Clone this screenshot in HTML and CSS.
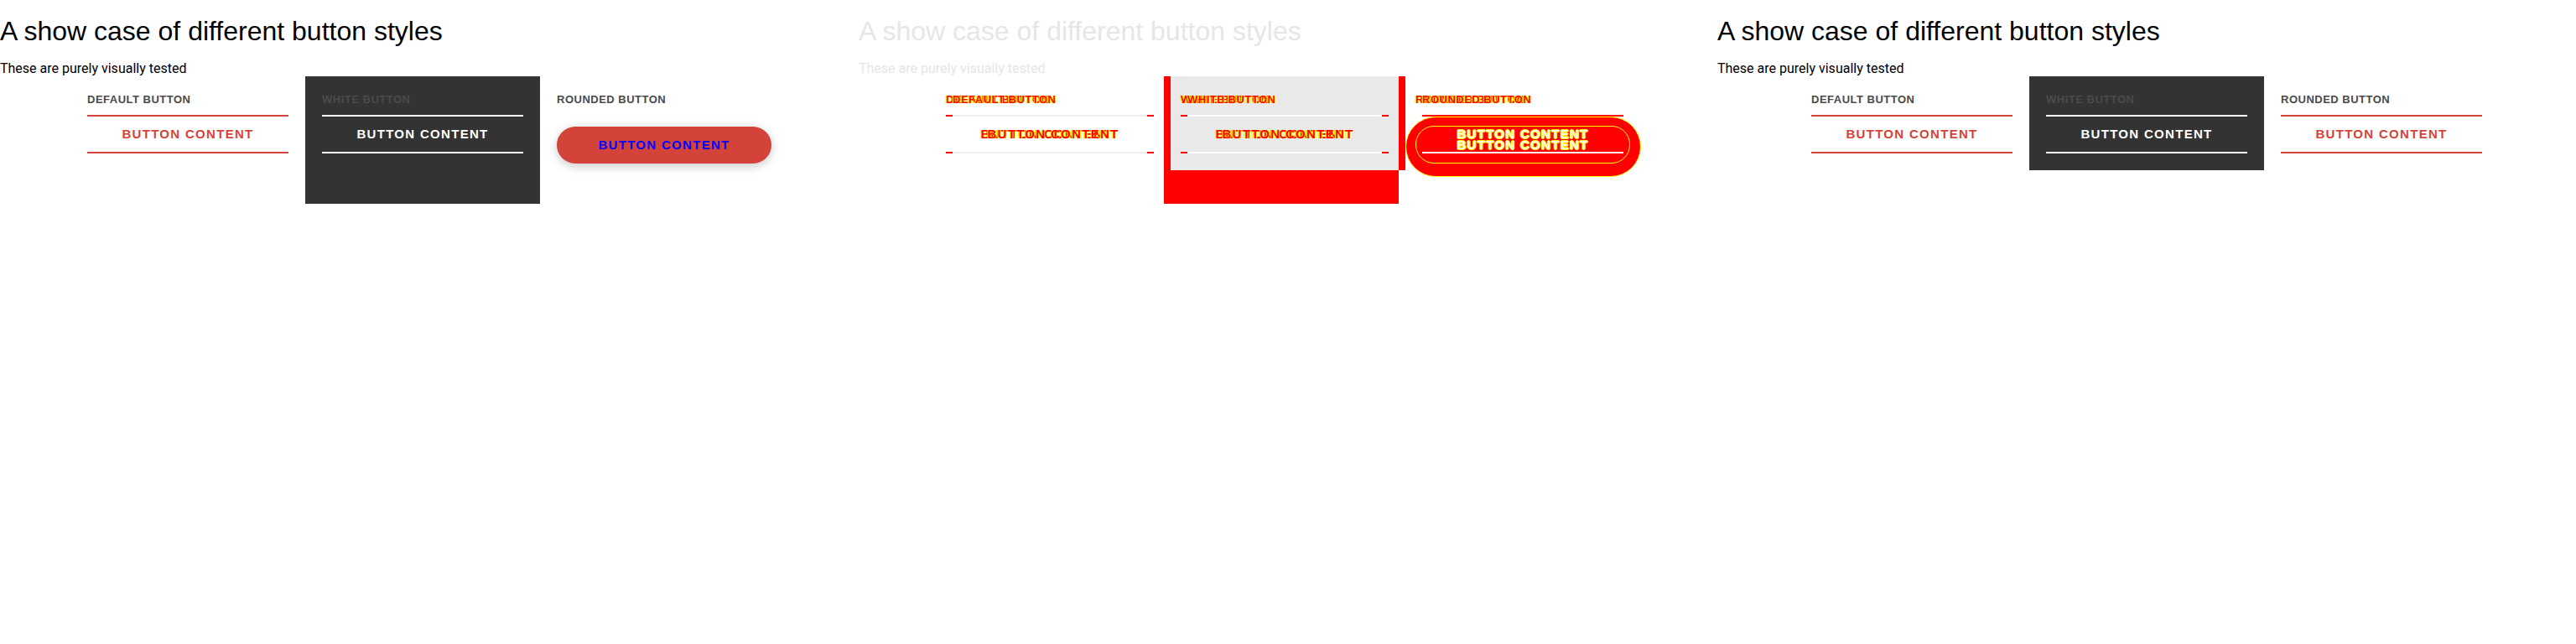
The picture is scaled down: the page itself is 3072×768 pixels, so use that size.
FILE: index.html
```html
<!DOCTYPE html>
<html>
<head>
<meta charset="utf-8">
<title>Button styles</title>
<link rel="stylesheet" href="styles.css">
</head>
<body>
<div class="screen">
  <section class="panel">
    <h1 class="title">A show case of different button styles</h1>
    <p class="lead">These are purely visually tested</p>
    <div class="row">
      <div class="col">
        <div class="label">DEFAULT BUTTON</div>
        <div class="btn">BUTTON CONTENT</div>
      </div>
      <div class="col col-dark">
        <div class="label">WHITE BUTTON</div>
        <div class="btn btn-white">BUTTON CONTENT</div>
      </div>
      <div class="col col-round">
        <div class="label">ROUNDED BUTTON</div>
        <div class="btn btn-round">BUTTON CONTENT</div>
      </div>
    </div>
  </section>

  <section class="panel panel-diff">
    <h1 class="title">A show case of different button styles</h1>
    <p class="lead">These are purely visually tested</p>
    <div class="diff-map">
      <div class="blk blk-a"></div>
      <div class="blk blk-b"></div>
      <div class="blk blk-c"></div>
      <div class="blk blk-d"></div>

      <div class="ln ln-fade ln-1t"></div>
      <div class="ln ln-fade ln-1b"></div>
      <div class="ln ln-white ln-2t"></div>
      <div class="ln ln-white ln-2b"></div>
      <div class="seg seg-1"></div>
      <div class="seg seg-2"></div>
      <div class="seg seg-3"></div>
      <div class="seg seg-4"></div>
      <div class="seg seg-5"></div>
      <div class="seg seg-6"></div>
      <div class="seg seg-7"></div>
      <div class="seg seg-8"></div>

      <div class="pill-outer"></div>
      <div class="ln ln-red ln-3t"></div>
      <div class="pill-inner"></div>
      <div class="ln ln-white ln-3b"></div>

      <div class="gl gl-1">DEFAULT BUTTON</div>
      <div class="gl gl-2">DEFAULT BUTTON</div>
      <div class="gl gl-3">WHITE BUTTON</div>
      <div class="gl gl-4">WHITE BUTTON</div>
      <div class="gl gl-5">ROUNDED BUTTON</div>
      <div class="gl gl-6">ROUNDED BUTTON</div>

      <div class="gt gt-1">BUTTON CONTENT</div>
      <div class="gt gt-2">BUTTON CONTENT</div>
      <div class="gt gt-3">BUTTON CONTENT</div>
      <div class="gt gt-4">BUTTON CONTENT</div>
      <div class="gw gw-1">BUTTON CONTENT</div>
      <div class="gw gw-2">BUTTON CONTENT</div>
    </div>
  </section>

  <section class="panel">
    <h1 class="title">A show case of different button styles</h1>
    <p class="lead">These are purely visually tested</p>
    <div class="row">
      <div class="col">
        <div class="label">DEFAULT BUTTON</div>
        <div class="btn">BUTTON CONTENT</div>
      </div>
      <div class="col col-dark">
        <div class="label">WHITE BUTTON</div>
        <div class="btn btn-white">BUTTON CONTENT</div>
      </div>
      <div class="col">
        <div class="label">ROUNDED BUTTON</div>
        <div class="btn">BUTTON CONTENT</div>
      </div>
    </div>
  </section>
</div>
</body>
</html>
```

FILE: styles.css
```css
html, body {
  margin: 0;
  padding: 0;
  background: #fff;
}

.screen {
  display: flex;
  width: 3072px;
  height: 768px;
}

.panel {
  flex: none;
  width: 1024px;
  height: 768px;
  overflow: hidden;
}

.title {
  margin: 19px 0 0;
  font: 400 32px/36px "Liberation Sans", Arial, sans-serif;
  color: #000;
}

.lead {
  margin: 17px 0 0;
  font: 400 16px/19px Roboto, "Liberation Sans", sans-serif;
  color: #000;
}

.row {
  display: flex;
  justify-content: center;
  align-items: stretch;
}

.col {
  width: 240px;
  padding: 20px;
}

.col-dark {
  background: #333333;
}

.col-round {
  width: 256px;
}

.label {
  margin-bottom: 11px;
  font: 700 13px/15px "Liberation Sans", Arial, sans-serif;
  letter-spacing: 0.5px;
  color: #4a4a4a;
  white-space: nowrap;
}

.btn {
  height: 42px;
  border-top: 2px solid #d4433a;
  border-bottom: 2px solid #d4433a;
  font: 700 15px/42px "Liberation Sans", Arial, sans-serif;
  letter-spacing: 1.3px;
  text-align: center;
  color: #d4433a;
  white-space: nowrap;
}

.btn-white {
  border-color: #fff;
  color: #fff;
}

.btn-round {
  height: 44px;
  margin: 25px 0 28px;
  border: 0;
  border-radius: 22px;
  background: #d4433a;
  color: #0000ff;
  line-height: 44px;
  box-shadow: 0 3px 12px rgba(0, 0, 0, 0.22);
}

/* diff panel */
.panel-diff .title,
.panel-diff .lead {
  color: #e6e6e6;
}

.diff-map {
  position: relative;
  height: 152px;
}

.diff-map > div {
  position: absolute;
}

.blk-a { left: 364px; top: 0; width: 8px; height: 152px; background: #ff0000; }
.blk-b { left: 372px; top: 0; width: 272px; height: 112px; background: #e9e9e9; }
.blk-c { left: 644px; top: 0; width: 8px; height: 112px; background: #ff0000; }
.blk-d { left: 372px; top: 112px; width: 272px; height: 40px; background: #ff0000; }

.ln { height: 2px; width: 232px; }
.ln-fade { background: #f0f0f0; }
.ln-white { background: #ffffff; }
.ln-red { background: #ff0000; }
.ln-1t { left: 112px; top: 46px; }
.ln-1b { left: 112px; top: 90px; }
.ln-2t { left: 392px; top: 46px; }
.ln-2b { left: 392px; top: 90px; }
.ln-3t { left: 672px; top: 46px; width: 240px; }
.ln-3b { left: 672px; top: 90px; width: 240px; }

.seg { width: 8px; height: 2px; background: #ff0000; }
.seg-1 { left: 104px; top: 46px; }
.seg-2 { left: 344px; top: 46px; }
.seg-3 { left: 104px; top: 90px; }
.seg-4 { left: 344px; top: 90px; }
.seg-5 { left: 384px; top: 46px; }
.seg-6 { left: 624px; top: 46px; }
.seg-7 { left: 384px; top: 90px; }
.seg-8 { left: 624px; top: 90px; }

.pill-outer {
  left: 652px;
  top: 48px;
  width: 279px;
  height: 70px;
  border: 1px solid #ffff00;
  border-radius: 36px;
  background: #ff0000;
}

.pill-inner {
  left: 664px;
  top: 59px;
  width: 254px;
  height: 43px;
  border: 1px solid #ffff00;
  border-radius: 22px;
}

.gl {
  top: 20px;
  font: 700 13px/15px "Liberation Sans", Arial, sans-serif;
  letter-spacing: 0.5px;
  color: #ff0000;
  text-shadow: 1px 0 0 #ffff00, -1px 0 0 #ffff00;
  white-space: nowrap;
}
.gl-1 { left: 104px; }
.gl-2 { left: 112px; }
.gl-3 { left: 384px; }
.gl-4 { left: 392px; }
.gl-5 { left: 664px; }
.gl-6 { left: 672px; }

.gt {
  top: 48px;
  width: 240px;
  font: 700 15px/42px "Liberation Sans", Arial, sans-serif;
  letter-spacing: 1.3px;
  text-align: center;
  color: #ff0000;
  text-shadow: 1px 0 0 #ffff00, -1px 0 0 #ffff00;
  white-space: nowrap;
}
.gt-1 { left: 104px; }
.gt-2 { left: 112px; }
.gt-3 { left: 384px; }
.gt-4 { left: 392px; }

.gw {
  width: 240px;
  font: 700 15px/42px "Liberation Sans", Arial, sans-serif;
  letter-spacing: 1.3px;
  text-align: center;
  color: #fff6f0;
  text-shadow: 1px 0 0 #ffff00, -1px 0 0 #ffff00, 0 1px 0 #ffff00, 0 -1px 0 #ffff00;
  white-space: nowrap;
}
.gw-1 { left: 672px; top: 48px; }
.gw-2 { left: 672px; top: 61px; }
```
